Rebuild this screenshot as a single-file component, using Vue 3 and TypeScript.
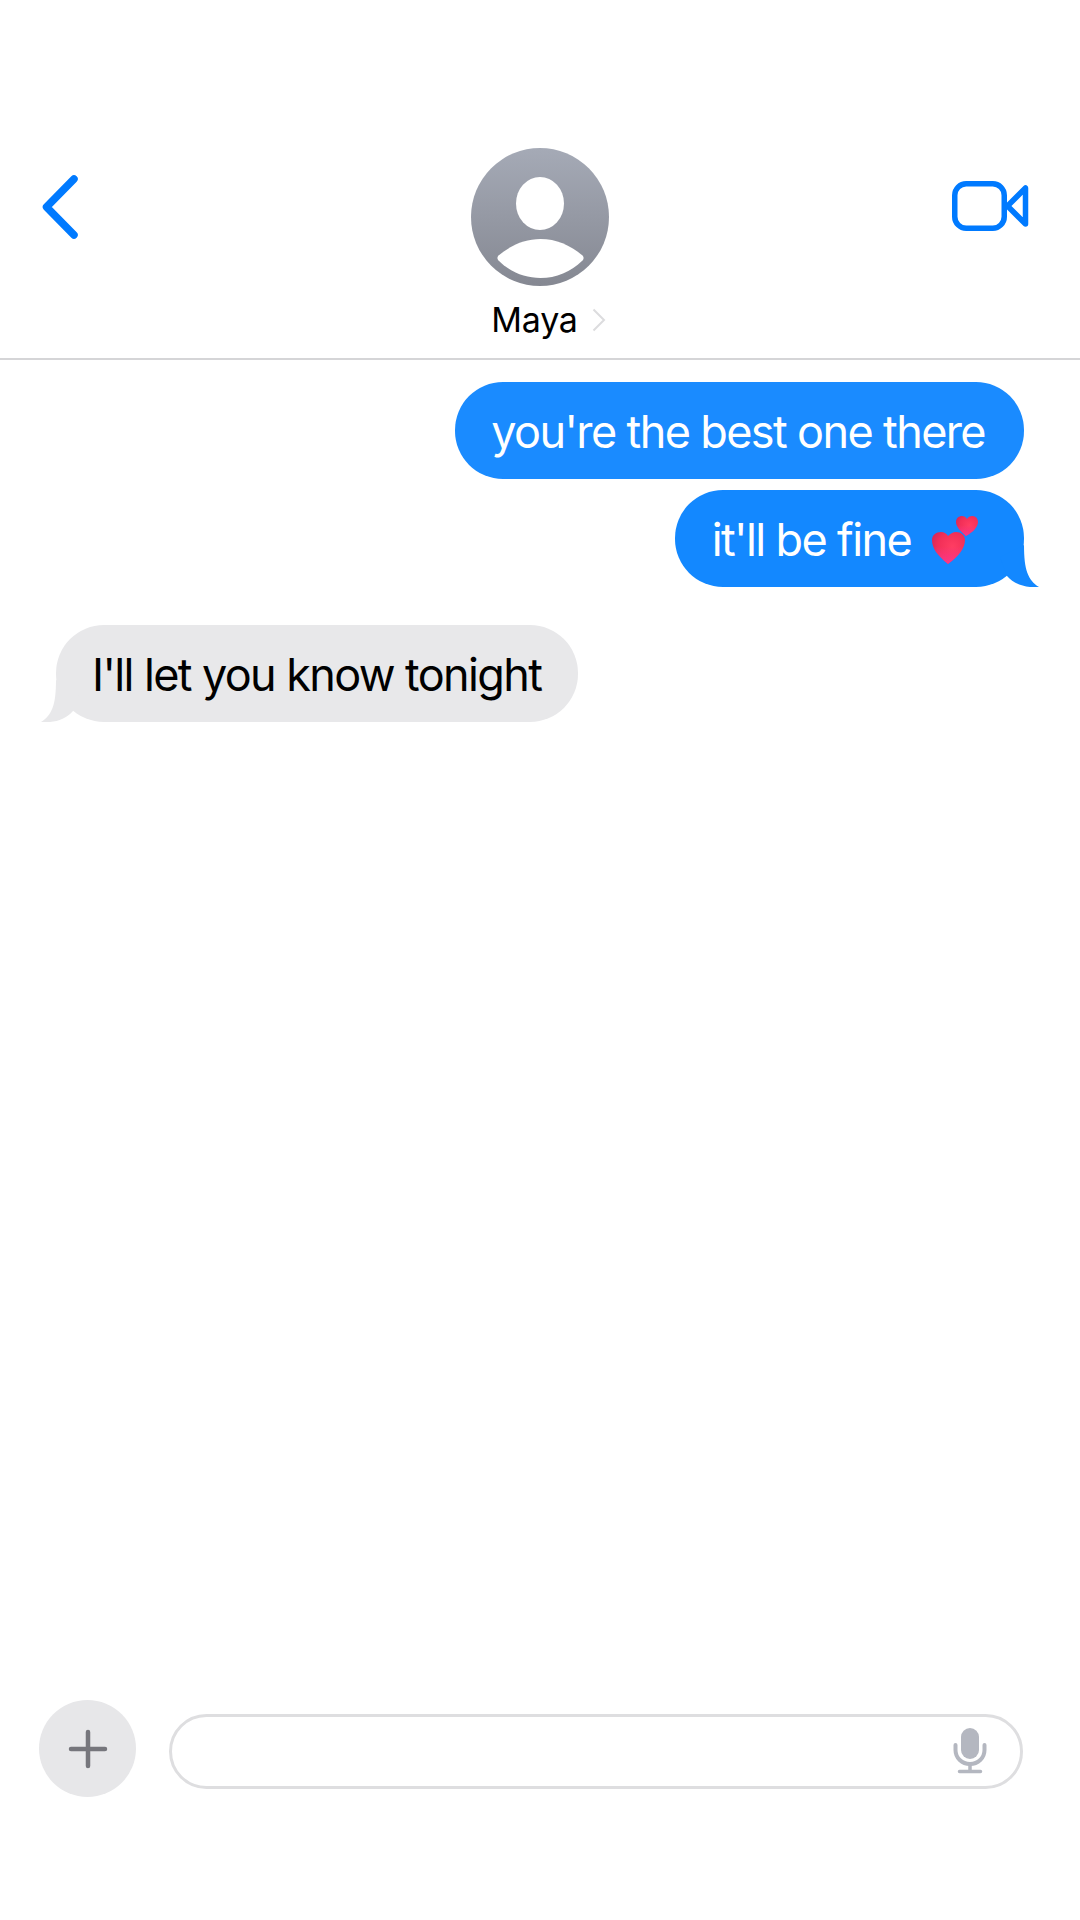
<template>
    <div class="screen">
        <header class="header">
            <button class="back" aria-label="back">
                <svg width="48" height="76" viewBox="0 0 48 76">
                    <path d="M36 10 L8.500 38 L36 66" fill="none" stroke="#007aff" stroke-width="7.5" stroke-linecap="round" stroke-linejoin="round" />
                </svg>
            </button>
            <div class="contact">
                <svg class="avatar" width="138" height="138" viewBox="0 0 138 138">
                    <defs>
                        <linearGradient id="avatarFill" x1="0" y1="0" x2="0" y2="1">
                            <stop offset="0" stop-color="#a5aab6" />
                            <stop offset="1" stop-color="#858892" />
                        </linearGradient>
                    </defs>
                    <circle cx="69" cy="69" r="69" fill="url(#avatarFill)" />
                    <ellipse cx="69" cy="55.500" rx="24" ry="26.500" fill="#fff" />
                    <path d="M27.500 107.500 C40 97 54 91 69.500 91 C85 91 99 97 111.500 107.500 C113 109 113 111 111.500 112.500 C100 124 85 130 69.500 130 C54 130 39 124 27.500 112.500 C26 111 26 109 27.500 107.500 Z" fill="#fff" />
                </svg>
                <div class="name">
                    <span>Maya</span>
                    <svg width="14" height="24" viewBox="0 0 14 24">
                        <path d="M1.500 1.500 L12 12 L1.500 22.500" fill="none" stroke="#dcdcde" stroke-width="2" />
                    </svg>
                </div>
            </div>
            <button class="video" aria-label="video call">
                <svg width="78" height="50" viewBox="0 0 78 50">
                    <rect x="3.750" y="2.750" width="49.500" height="44.500" rx="11.500" fill="none" stroke="#007aff" stroke-width="5.500" />
                    <path d="M56.500 25 L74.500 7 L74.500 43 Z" fill="none" stroke="#007aff" stroke-width="5.500" stroke-linejoin="round" />
                </svg>
            </button>
        </header>

        <main class="thread">
            <div class="sent-group">
                <div class="bubble sent first">you're the best one there</div>
                <div class="bubble sent second">
                    <span>it'll be fine</span>
                    <svg class="hearts" width="48" height="50" viewBox="0 0 48 50">
                        <defs>
                            <radialGradient id="heartFill" cx="0.62" cy="0.45" r="0.72">
                                <stop offset="0" stop-color="#ff3d62" />
                                <stop offset="0.6" stop-color="#f22f58" />
                                <stop offset="1" stop-color="#cf2758" />
                            </radialGradient>
                            <linearGradient id="heartGlow" x1="0" y1="0" x2="0" y2="1">
                                <stop offset="0.45" stop-color="#ff3a90" stop-opacity="0" />
                                <stop offset="1" stop-color="#ff3a90" stop-opacity="0.9" />
                            </linearGradient>
                        </defs>
                        <path d="M35 21 C28 15 25 11 25 7 C25 3 28 1 31 1 C33 1 35 2 36 4 C37 2 39 1 41 1 C44 1 47 3 47 7 C47 12 42 17 35 21 Z" fill="url(#heartFill)" />
                        <path d="M35 21 C28 15 25 11 25 7 C25 3 28 1 31 1 C33 1 35 2 36 4 C37 2 39 1 41 1 C44 1 47 3 47 7 C47 12 42 17 35 21 Z" fill="url(#heartGlow)" />
                        <path d="M17 49 C6 40 1 33 1 25 C1 20 5 17 10 17 C13 17 16 19 17 21 C19 19 22 17 25 17 C30 17 34 20 34 25 C34 33 28 41 17 49 Z" fill="url(#heartFill)" />
                        <path d="M17 49 C6 40 1 33 1 25 C1 20 5 17 10 17 C13 17 16 19 17 21 C19 19 22 17 25 17 C30 17 34 20 34 25 C34 33 28 41 17 49 Z" fill="url(#heartGlow)" />
                    </svg>
                    <svg class="tail" width="60" height="60" viewBox="0 0 60 60">
                        <path d="M44 18 C44 43 48 53 59 60 C46 61 35 58 27 49 L20 30 Z" fill="#1388ff" />
                    </svg>
                </div>
            </div>
            <div class="bubble received">
                <span>I'll let you know tonight</span>
                <svg class="tail" width="60" height="60" viewBox="0 0 60 60">
                    <path d="M16 18 C16 43 12 53 1 60 C14 61 25 58 33 49 L40 30 Z" fill="#e8e8ea" />
                </svg>
            </div>
        </main>

        <footer class="composer">
            <button class="plus" aria-label="add">
                <svg width="40" height="40" viewBox="0 0 40 40">
                    <path d="M20 3 L20 37 M3 20 L37 20" stroke="#76767c" stroke-width="4.500" stroke-linecap="round" />
                </svg>
            </button>
            <div class="input">
                <svg class="mic" width="34" height="46" viewBox="0 0 34 46">
                    <rect x="8" y="0" width="18" height="31" rx="9" fill="#b4b7c0" />
                    <path d="M2.500 17 L2.500 22 C2.500 30 9 36 17 36 C25 36 31.500 30 31.500 22 L31.500 17" fill="none" stroke="#b4b7c0" stroke-width="4" stroke-linecap="round" />
                    <path d="M17 36 L17 43.500 M6.500 43.500 L27.500 43.500" fill="none" stroke="#b4b7c0" stroke-width="3.500" stroke-linecap="round" />
                </svg>
            </div>
        </footer>
    </div>
</template>

<script setup lang="ts">
</script>

<style>
html,
body {
    margin: 0;
    background: #fff;
}
</style>

<style scoped>
.screen {
    width: 1080px;
    height: 1920px;
    display: flex;
    flex-direction: column;
    background: #fff;
    font-family: Inter, "Liberation Sans", sans-serif;
}

button {
    background: none;
    border: none;
    padding: 0;
    display: flex;
}

.header {
    height: 212px;
    margin-top: 148px;
    box-sizing: border-box;
    border-bottom: 2px solid #d5d5d7;
    display: grid;
    grid-template-columns: 1fr auto 1fr;
    align-items: start;
}

.back {
    margin: 21px 0 0 38px;
    justify-self: start;
}

.video {
    margin: 33px 51px 0 0;
    justify-self: end;
}

.contact {
    display: flex;
    flex-direction: column;
    align-items: center;
}

.avatar {
    display: block;
}

.name {
    margin-top: 14px;
    margin-left: 17px;
    display: flex;
    align-items: center;
    gap: 14px;
    font-size: 34px;
    line-height: 40px;
    letter-spacing: -0.2px;
    color: #000;
}

.thread {
    flex: 1;
    padding: 22px 56px 0 56px;
    display: flex;
    flex-direction: column;
    gap: 38px;
}

.sent-group {
    display: flex;
    flex-direction: column;
    align-items: flex-end;
    gap: 11px;
}

.bubble {
    position: relative;
    height: 97px;
    box-sizing: border-box;
    padding: 2px 36px 0;
    border-radius: 48px;
    display: flex;
    align-items: center;
    font-size: 45px;
    letter-spacing: -1.62px;
    white-space: nowrap;
}

.sent {
    color: #fff;
}

.first {
    padding-right: 39px;
    background: #1a8bff;
}

.second {
    padding-left: 37px;
    padding-right: 45px;
    background: #1388ff;
    gap: 20px;
}

.received {
    align-self: flex-start;
    padding-right: 37px;
    background: #e8e8ea;
    color: #000;
}

.tail {
    position: absolute;
    bottom: 0;
}

.second .tail {
    right: -16px;
}

.received .tail {
    left: -16px;
}

.composer {
    margin-bottom: 123px;
    padding-left: 39px;
    display: flex;
    align-items: center;
    gap: 33px;
}

.plus {
    width: 97px;
    height: 97px;
    border-radius: 50%;
    background: #e7e7e9;
    align-items: center;
    justify-content: center;
}

.input {
    width: 854px;
    height: 75px;
    box-sizing: border-box;
    border: 3px solid #dedee0;
    border-radius: 38px;
    margin-top: 5px;
    display: flex;
    align-items: center;
    justify-content: flex-end;
    padding-right: 33px;
}
</style>
